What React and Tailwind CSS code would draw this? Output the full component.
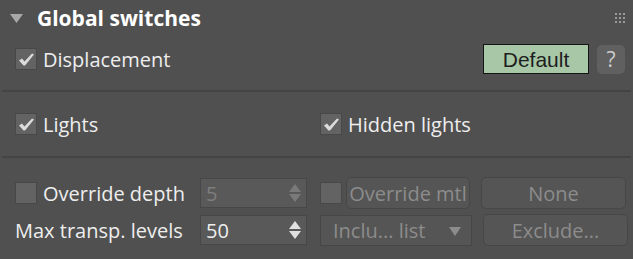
import React from 'react';

const Check = ({ checked }) => (
  <div className="w-[22px] h-[22px] bg-[#636363] border border-[#484848] flex items-center justify-center shrink-0">
    {checked && (
      <svg width="17" height="15" viewBox="0 0 17 15">
        <path d="M1 8.5 L4 6.5 L6.5 9.5 L14 1.5 L16 2.5 L7 13.5 L5.5 13.5 Z" fill="#dcdcdc" />
      </svg>
    )}
  </div>
);

const Spinner = ({ value, disabled }) => (
  <div className="w-[107px] h-[30px] bg-[#595959] border border-[#474747] flex items-center pl-[5px] pr-[5px]">
    <span className={`text-[20px] pt-[2px] ${disabled ? 'text-[#7e7e7e]' : 'text-[#eeeeee]'}`}>{value}</span>
    <div className="ml-auto flex flex-col gap-[2px] items-center">
      <svg width="12" height="8" viewBox="0 0 12 8"><path d="M6 0 L12 8 L0 8 Z" fill={disabled ? '#7a7a7a' : '#e0e0e0'} /></svg>
      <svg width="12" height="8" viewBox="0 0 12 8"><path d="M0 0 L12 0 L6 8 Z" fill={disabled ? '#7a7a7a' : '#e0e0e0'} /></svg>
    </div>
  </div>
);

const GhostButton = ({ children, className = '' }) => (
  <div className={`h-[32px] pt-[2px] rounded-[5px] bg-[#555555] border border-[#474747] flex items-center justify-center text-[20px] text-[#8c8c8c] ${className}`}>
    {children}
  </div>
);

export default function App() {
  return (
    <div className="w-[633px] h-[259px] bg-[#505050] overflow-hidden text-[#eeeeee] font-['Open_Sans',sans-serif] leading-none">
      {/* Header */}
      <div className="h-[36px] flex items-center pl-[10px] pr-[8px]">
        <svg width="13" height="9" viewBox="0 0 13 9"><path d="M0 0 L13 0 L6.5 9 Z" fill="#a8a8a8" /></svg>
        <span className="ml-[14px] text-[21px] font-bold text-white">Global switches</span>
        <div className="ml-auto grid grid-cols-3 gap-[2px]">
          {Array.from({ length: 9 }).map((_, i) => (
            <div key={i} className="w-[2px] h-[2px] bg-[#9a9a9a]" />
          ))}
        </div>
      </div>

      {/* Displacement */}
      <div className="mt-[8px] h-[30px] flex items-center pl-[15px] pr-[8px]">
        <Check checked />
        <span className="ml-[6px] pt-[2px] text-[20px]">Displacement</span>
        <div className="ml-auto w-[106px] h-[30px] bg-[#a7c7a7] border border-[#151515] flex items-center justify-center text-[21px] text-[#1e1e1e] font-['Liberation_Sans',sans-serif]">
          Default
        </div>
        <div className="ml-[8px] w-[28px] h-[29px] rounded-[5px] bg-[#606060] flex items-center justify-center text-[21px] text-[#cccccc]">
          ?
        </div>
      </div>

      <div className="mt-[16px] mx-[2px] h-[2px] bg-[#444444]" />

      {/* Lights */}
      <div className="h-[64px] flex items-center pl-[15px]">
        <div className="w-[305px] flex items-center">
          <Check checked />
          <span className="ml-[6px] pt-[2px] text-[20px]">Lights</span>
        </div>
        <Check checked />
        <span className="ml-[6px] pt-[2px] text-[20px]">Hidden lights</span>
      </div>

      <div className="mx-[2px] h-[2px] bg-[#444444]" />

      {/* Override depth */}
      <div className="mt-[19px] h-[32px] flex items-center pl-[15px]">
        <div className="w-[185px] flex items-center">
          <Check />
          <span className="ml-[6px] pt-[2px] text-[20px]">Override depth</span>
        </div>
        <Spinner value="5" disabled />
        <div className="ml-[13px] flex items-center">
          <Check />
          <GhostButton className="ml-[4px] w-[124px]">Override mtl</GhostButton>
        </div>
        <GhostButton className="ml-[11px] w-[145px]">None</GhostButton>
      </div>

      {/* Max transp */}
      <div className="mt-[5px] h-[32px] flex items-center pl-[15px]">
        <div className="w-[185px] flex items-center">
          <span className="pt-[2px] text-[20px]">Max transp. levels</span>
        </div>
        <Spinner value="50" />
        <div className="ml-[13px] w-[152px] h-[31px] pt-[2px] bg-[#555555] border border-[#474747] flex items-center pl-[12px] pr-[10px] text-[20px] text-[#8c8c8c]">
          Inclu... list
          <svg className="ml-auto" width="12" height="9" viewBox="0 0 12 9"><path d="M0 0 L12 0 L6 9 Z" fill="#8c8c8c" /></svg>
        </div>
        <GhostButton className="ml-[11px] w-[145px]">Exclude...</GhostButton>
      </div>
    </div>
  );
}
